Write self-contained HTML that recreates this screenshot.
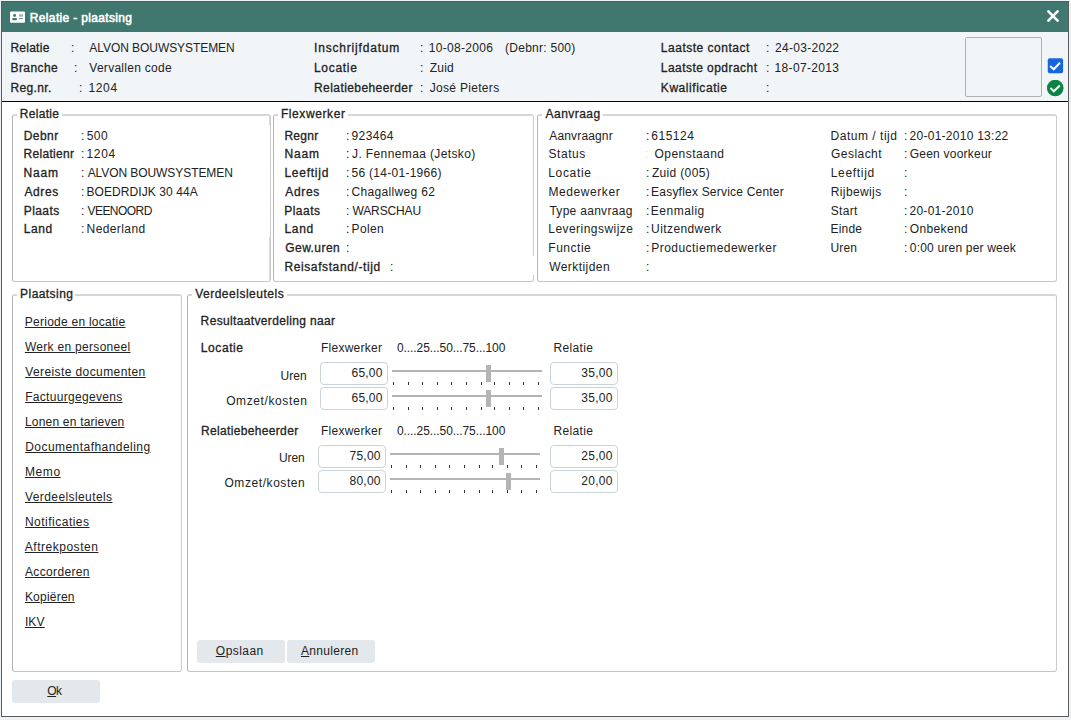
<!DOCTYPE html><html><head><meta charset="utf-8"><style>
*{margin:0;padding:0;box-sizing:border-box}
html,body{width:1071px;height:720px;overflow:hidden;background:#eef1f3;font-family:"Liberation Sans",sans-serif;font-size:12px;color:#222}
.t{position:absolute;white-space:pre;line-height:14px}
.b{-webkit-text-stroke:0.3px currentColor}
.bb{-webkit-text-stroke:0.55px currentColor}
.fs{position:absolute;border:1px solid #c4c4c4;border-top:2px solid #d6d6d6;border-left-color:#b2b2b2;border-right-color:#cacaca;border-radius:3px}
.lg{position:absolute;background:#fff;height:14px}
.u{text-decoration:underline;text-underline-offset:1px}
.inp{position:absolute;border:1px solid #c9d3dc;border-radius:4px;background:#fff}
</style></head><body><div style="position:absolute;left:1px;top:1px;width:1068px;height:716px;background:#fff;border:1px solid #5c5c5c"></div>
<div style="position:absolute;left:2px;top:2px;width:1066px;height:30px;background:#40776f"></div>
<svg style="position:absolute;left:10px;top:11px" width="18" height="14" viewBox="0 0 18 14"><rect x="0" y="0.55" width="15" height="11.15" rx="1" fill="#fff"/><circle cx="4.6" cy="4.5" r="1.45" fill="#40776f"/><rect x="2.2" y="7.1" width="4.8" height="2.1" rx="1" fill="#40776f"/><rect x="9.05" y="3.3" width="3.85" height="2.4" fill="#40776f" opacity="0.55"/><rect x="9.05" y="7.1" width="3.85" height="0.8" fill="#40776f"/></svg>
<div id="t1" class="t bb" style="top:11px;left:29.84px;letter-spacing:0.342px;color:#fff">Relatie - plaatsing</div>
<svg style="position:absolute;left:1046px;top:8.6px" width="14" height="14" viewBox="0 0 14 14"><path d="M2.4 2.4 L11.6 11.6 M11.6 2.4 L2.4 11.6" stroke="#fff" stroke-width="2.7" stroke-linecap="round"/></svg>
<div style="position:absolute;left:2px;top:32px;width:1066px;height:69px;background:#f1f5f8"></div>
<div style="position:absolute;left:2px;top:101px;width:1066px;height:1px;background:#000"></div>
<div id="t2" class="t b" style="top:41px;left:10.41px;letter-spacing:0.258px;">Relatie</div>
<div id="t3" class="t " style="top:41px;left:71.00px;">:</div>
<div id="t4" class="t " style="top:41px;left:89.37px;letter-spacing:-0.068px;">ALVON BOUWSYSTEMEN</div>
<div id="t5" class="t b" style="top:61px;left:10.46px;letter-spacing:0.440px;">Branche</div>
<div id="t6" class="t " style="top:61px;left:74.00px;">:</div>
<div id="t7" class="t " style="top:61px;left:89.31px;letter-spacing:0.277px;">Vervallen code</div>
<div id="t8" class="t b" style="top:81px;left:10.54px;letter-spacing:0.355px;">Reg.nr.</div>
<div id="t9" class="t " style="top:81px;left:79.00px;">:</div>
<div id="t10" class="t " style="top:81px;left:88.56px;letter-spacing:0.608px;">1204</div>
<div id="t11" class="t b" style="top:41px;left:314.07px;letter-spacing:0.812px;">Inschrijfdatum</div>
<div id="t12" class="t " style="top:41px;left:420.00px;">:</div>
<div id="t13" class="t " style="top:41px;left:428.81px;letter-spacing:0.294px;">10-08-2006</div>
<div id="t14" class="t b" style="top:61px;left:314.01px;letter-spacing:0.690px;">Locatie</div>
<div id="t15" class="t " style="top:61px;left:420.00px;">:</div>
<div id="t16" class="t " style="top:61px;left:429.73px;letter-spacing:0.221px;">Zuid</div>
<div id="t17" class="t b" style="top:81px;left:314.01px;letter-spacing:0.425px;">Relatiebeheerder</div>
<div id="t18" class="t " style="top:81px;left:420.00px;">:</div>
<div id="t19" class="t " style="top:81px;left:429.67px;letter-spacing:0.316px;">Jos&eacute; Pieters</div>
<div id="t20" class="t " style="top:41px;left:505.11px;letter-spacing:0.251px;">(Debnr: 500)</div>
<div id="t21" class="t b" style="top:41px;left:660.86px;letter-spacing:0.504px;">Laatste contact</div>
<div id="t22" class="t " style="top:41px;left:766.00px;">:</div>
<div id="t23" class="t " style="top:41px;left:775.03px;letter-spacing:0.291px;">24-03-2022</div>
<div id="t24" class="t b" style="top:61px;left:660.76px;letter-spacing:0.457px;">Laatste opdracht</div>
<div id="t25" class="t " style="top:61px;left:766.00px;">:</div>
<div id="t26" class="t " style="top:61px;left:774.61px;letter-spacing:0.316px;">18-07-2013</div>
<div id="t27" class="t b" style="top:81px;left:660.83px;letter-spacing:0.551px;">Kwalificatie</div>
<div id="t28" class="t " style="top:81px;left:766.00px;">:</div>
<div style="position:absolute;left:965px;top:37px;width:77px;height:60px;border:1px solid #b0b0b0;border-radius:2px"></div>
<svg style="position:absolute;left:1047px;top:58px" width="17" height="17" viewBox="0 0 17 17"><rect x="0.75" y="0.2" width="15.35" height="15" rx="2" fill="#1865e0"/><path d="M3.2 8 L6.7 11.3 L13 4.8" stroke="#fff" stroke-width="2" fill="none"/></svg>
<svg style="position:absolute;left:1047px;top:80px" width="18" height="18" viewBox="0 0 18 18"><circle cx="8.25" cy="8.05" r="8.3" fill="#0a8542"/><path d="M3.4 7.9 L6.8 11.3 L12.9 5.5" stroke="#fff" stroke-width="2" fill="none"/></svg>
<div class="fs" style="left:12px;top:114px;width:259px;height:168px"></div>
<div class="lg" style="left:16.8px;top:107px;width:44.900000000000006px"></div>
<div id="t29" class="t b" style="top:107px;left:19.74px;letter-spacing:0.313px;">Relatie</div>
<div class="fs" style="left:273px;top:114px;width:261px;height:168px"></div>
<div class="lg" style="left:278.0px;top:107px;width:70.30000000000001px"></div>
<div id="t30" class="t b" style="top:107px;left:280.90px;letter-spacing:0.599px;">Flexwerker</div>
<div class="fs" style="left:537px;top:114px;width:520px;height:168px"></div>
<div class="lg" style="left:542.1px;top:107px;width:60.69999999999993px"></div>
<div id="t31" class="t b" style="top:107px;left:545.52px;letter-spacing:0.472px;">Aanvraag</div>
<div style="position:absolute;left:269px;top:116px;width:1px;height:9px;background:#dadada"></div>
<div style="position:absolute;left:269px;top:237px;width:1px;height:43px;background:#dadada"></div>
<div style="position:absolute;left:533px;top:256px;width:1px;height:19px;background:#fff"></div>
<div class="fs" style="left:12px;top:294px;width:170px;height:378px"></div>
<div class="lg" style="left:17.1px;top:287px;width:58.4px"></div>
<div id="t32" class="t b" style="top:287px;left:20.12px;letter-spacing:0.432px;">Plaatsing</div>
<div class="fs" style="left:187px;top:294px;width:870px;height:378px"></div>
<div class="lg" style="left:191.7px;top:287px;width:95.0px"></div>
<div id="t33" class="t b" style="top:287px;left:195.15px;letter-spacing:0.512px;">Verdeelsleutels</div>
<div id="t34" class="t b" style="top:129px;left:23.66px;letter-spacing:0.454px;">Debnr</div>
<div id="t35" class="t " style="top:129px;left:81.00px;">:</div>
<div id="t36" class="t " style="top:129px;left:86.69px;letter-spacing:0.503px;">500</div>
<div id="t37" class="t b" style="top:147px;left:23.56px;letter-spacing:0.309px;">Relatienr</div>
<div id="t38" class="t " style="top:147px;left:81.00px;">:</div>
<div id="t39" class="t " style="top:147px;left:86.52px;letter-spacing:0.642px;">1204</div>
<div id="t40" class="t b" style="top:166px;left:23.60px;letter-spacing:0.789px;">Naam</div>
<div id="t41" class="t " style="top:166px;left:81.00px;">:</div>
<div id="t42" class="t " style="top:166px;left:87.66px;letter-spacing:-0.074px;">ALVON BOUWSYSTEMEN</div>
<div id="t43" class="t b" style="top:185px;left:24.40px;letter-spacing:0.613px;">Adres</div>
<div id="t44" class="t " style="top:185px;left:81.00px;">:</div>
<div id="t45" class="t " style="top:185px;left:86.56px;letter-spacing:0.072px;">BOEDRDIJK 30 44A</div>
<div id="t46" class="t b" style="top:204px;left:23.71px;letter-spacing:0.423px;">Plaats</div>
<div id="t47" class="t " style="top:204px;left:81.00px;">:</div>
<div id="t48" class="t " style="top:204px;left:87.46px;letter-spacing:-0.537px;">VEENOORD</div>
<div id="t49" class="t b" style="top:222px;left:23.73px;letter-spacing:0.614px;">Land</div>
<div id="t50" class="t " style="top:222px;left:81.00px;">:</div>
<div id="t51" class="t " style="top:222px;left:86.60px;letter-spacing:0.394px;">Nederland</div>
<div id="t52" class="t b" style="top:129px;left:284.44px;letter-spacing:0.253px;">Regnr</div>
<div id="t53" class="t " style="top:129px;left:346.00px;">:</div>
<div id="t54" class="t " style="top:129px;left:351.57px;letter-spacing:0.365px;">923464</div>
<div id="t55" class="t b" style="top:147px;left:284.40px;letter-spacing:0.856px;">Naam</div>
<div id="t56" class="t " style="top:147px;left:346.00px;">:</div>
<div id="t57" class="t " style="top:147px;left:352.05px;letter-spacing:0.377px;">J. Fennemaa (Jetsko)</div>
<div id="t58" class="t b" style="top:166px;left:284.45px;letter-spacing:0.749px;">Leeftijd</div>
<div id="t59" class="t " style="top:166px;left:346.00px;">:</div>
<div id="t60" class="t " style="top:166px;left:351.53px;letter-spacing:0.277px;">56 (14-01-1966)</div>
<div id="t61" class="t b" style="top:185px;left:285.23px;letter-spacing:0.688px;">Adres</div>
<div id="t62" class="t " style="top:185px;left:346.00px;">:</div>
<div id="t63" class="t " style="top:185px;left:351.62px;letter-spacing:0.319px;">Chagallweg 62</div>
<div id="t64" class="t b" style="top:204px;left:284.21px;letter-spacing:0.483px;">Plaats</div>
<div id="t65" class="t " style="top:204px;left:346.00px;">:</div>
<div id="t66" class="t " style="top:204px;left:352.45px;letter-spacing:-0.119px;">WARSCHAU</div>
<div id="t67" class="t b" style="top:222px;left:284.46px;letter-spacing:0.681px;">Land</div>
<div id="t68" class="t " style="top:222px;left:346.00px;">:</div>
<div id="t69" class="t " style="top:222px;left:351.52px;letter-spacing:0.390px;">Polen</div>
<div id="t70" class="t b" style="top:241px;left:285.26px;letter-spacing:0.443px;">Gew.uren</div>
<div id="t71" class="t " style="top:241px;left:346.00px;">:</div>
<div id="t72" class="t b" style="top:260px;left:284.41px;letter-spacing:0.608px;">Reisafstand/-tijd</div>
<div id="t73" class="t " style="top:260px;left:390.00px;">:</div>
<div id="t74" class="t " style="top:129px;left:549.27px;letter-spacing:0.154px;">Aanvraagnr</div>
<div id="t75" class="t " style="top:129px;left:646.00px;">:</div>
<div id="t76" class="t " style="top:129px;left:651.36px;letter-spacing:0.489px;">615124</div>
<div id="t77" class="t " style="top:147px;left:548.57px;letter-spacing:0.535px;">Status</div>
<div id="t78" class="t " style="top:147px;left:645.00px;color:#f9d49a">:</div>
<div id="t79" class="t " style="top:166px;left:548.28px;letter-spacing:0.654px;">Locatie</div>
<div id="t80" class="t " style="top:166px;left:646.00px;">:</div>
<div id="t81" class="t " style="top:166px;left:651.93px;letter-spacing:0.338px;">Zuid (005)</div>
<div id="t82" class="t " style="top:185px;left:548.40px;letter-spacing:0.589px;">Medewerker</div>
<div id="t83" class="t " style="top:185px;left:646.00px;">:</div>
<div id="t84" class="t " style="top:185px;left:651.11px;letter-spacing:0.205px;">Easyflex Service Center</div>
<div id="t85" class="t " style="top:204px;left:549.39px;letter-spacing:0.295px;">Type aanvraag</div>
<div id="t86" class="t " style="top:204px;left:646.00px;">:</div>
<div id="t87" class="t " style="top:204px;left:650.85px;letter-spacing:0.489px;">Eenmalig</div>
<div id="t88" class="t " style="top:222px;left:548.28px;letter-spacing:0.456px;">Leveringswijze</div>
<div id="t89" class="t " style="top:222px;left:646.00px;">:</div>
<div id="t90" class="t " style="top:222px;left:651.09px;letter-spacing:0.408px;">Uitzendwerk</div>
<div id="t91" class="t " style="top:241px;left:548.35px;letter-spacing:0.512px;">Functie</div>
<div id="t92" class="t " style="top:241px;left:646.00px;">:</div>
<div id="t93" class="t " style="top:241px;left:651.20px;letter-spacing:0.476px;">Productiemedewerker</div>
<div id="t94" class="t " style="top:260px;left:549.22px;letter-spacing:0.434px;">Werktijden</div>
<div id="t95" class="t " style="top:260px;left:646.00px;">:</div>
<div id="t96" class="t " style="top:147px;left:654.58px;letter-spacing:0.443px;">Openstaand</div>
<div id="t97" class="t " style="top:129px;left:830.60px;letter-spacing:0.515px;">Datum / tijd</div>
<div id="t98" class="t " style="top:129px;left:904.00px;">:</div>
<div id="t99" class="t " style="top:129px;left:909.62px;letter-spacing:0.260px;">20-01-2010 13:22</div>
<div id="t100" class="t " style="top:147px;left:830.99px;letter-spacing:0.462px;">Geslacht</div>
<div id="t101" class="t " style="top:147px;left:904.00px;">:</div>
<div id="t102" class="t " style="top:147px;left:909.69px;letter-spacing:0.228px;">Geen voorkeur</div>
<div id="t103" class="t " style="top:166px;left:830.65px;letter-spacing:0.696px;">Leeftijd</div>
<div id="t104" class="t " style="top:166px;left:904.00px;">:</div>
<div id="t105" class="t " style="top:185px;left:830.72px;letter-spacing:0.389px;">Rijbewijs</div>
<div id="t106" class="t " style="top:185px;left:904.00px;">:</div>
<div id="t107" class="t " style="top:204px;left:830.64px;letter-spacing:0.348px;">Start</div>
<div id="t108" class="t " style="top:204px;left:904.00px;">:</div>
<div id="t109" class="t " style="top:204px;left:909.48px;letter-spacing:0.276px;">20-01-2010</div>
<div id="t110" class="t " style="top:222px;left:830.60px;letter-spacing:0.156px;">Einde</div>
<div id="t111" class="t " style="top:222px;left:904.00px;">:</div>
<div id="t112" class="t " style="top:222px;left:909.82px;letter-spacing:0.355px;">Onbekend</div>
<div id="t113" class="t " style="top:241px;left:830.56px;letter-spacing:0.117px;">Uren</div>
<div id="t114" class="t " style="top:241px;left:904.00px;">:</div>
<div id="t115" class="t " style="top:241px;left:909.86px;letter-spacing:0.188px;">0:00 uren per week</div>
<div id="t116" class="t u" style="top:315px;left:24.80px;letter-spacing:0.251px;">Periode en locatie</div>
<div id="t117" class="t u" style="top:340px;left:24.88px;letter-spacing:0.302px;">Werk en personeel</div>
<div id="t118" class="t u" style="top:365px;left:25.17px;letter-spacing:0.408px;">Vereiste documenten</div>
<div id="t119" class="t u" style="top:390px;left:25.14px;letter-spacing:0.313px;">Factuurgegevens</div>
<div id="t120" class="t u" style="top:415px;left:25.00px;letter-spacing:0.195px;">Lonen en tarieven</div>
<div id="t121" class="t u" style="top:440px;left:25.22px;letter-spacing:0.450px;">Documentafhandeling</div>
<div id="t122" class="t u" style="top:465px;left:24.90px;letter-spacing:0.614px;">Memo</div>
<div id="t123" class="t u" style="top:490px;left:25.04px;letter-spacing:0.405px;">Verdeelsleutels</div>
<div id="t124" class="t u" style="top:515px;left:24.95px;letter-spacing:0.492px;">Notificaties</div>
<div id="t125" class="t u" style="top:540px;left:24.82px;letter-spacing:0.515px;">Aftrekposten</div>
<div id="t126" class="t u" style="top:565px;left:24.97px;letter-spacing:0.348px;">Accorderen</div>
<div id="t127" class="t u" style="top:590px;left:24.90px;letter-spacing:0.219px;">Kopi&euml;ren</div>
<div id="t128" class="t u" style="top:615px;left:24.89px;letter-spacing:0.152px;">IKV</div>
<div id="t129" class="t b" style="top:314px;left:200.61px;letter-spacing:0.350px;">Resultaatverdeling naar</div>
<div id="t130" class="t b" style="top:341px;left:200.83px;letter-spacing:0.572px;">Locatie</div>
<div id="t131" class="t " style="top:341px;left:320.97px;letter-spacing:0.263px;">Flexwerker</div>
<div id="t132" class="t " style="top:341px;left:396.97px;letter-spacing:-0.079px;">0....25...50...75...100</div>
<div id="t133" class="t " style="top:341px;left:553.55px;letter-spacing:0.345px;">Relatie</div>
<div id="t134" class="t " style="top:369px;right:764.24px;text-align:right;letter-spacing:0.092px;">Uren</div>
<div class="inp" style="left:320px;top:362px;width:68px;height:23px"></div>
<div id="t135" class="t " style="top:366px;right:688.30px;text-align:right;letter-spacing:0.238px;">65,00</div>
<div class="inp" style="left:550px;top:362px;width:68px;height:23px"></div>
<div id="t136" class="t " style="top:366px;right:458.22px;text-align:right;letter-spacing:0.319px;">35,00</div>
<div style="position:absolute;left:392px;top:370px;width:150px;height:2px;background:#b4b4b4"></div>
<div style="position:absolute;left:486px;top:365px;width:5px;height:17px;background:#b4b4b4"></div>
<div style="position:absolute;left:393px;top:382px;width:1px;height:3px;background:#333"></div>
<div style="position:absolute;left:408px;top:382px;width:1px;height:3px;background:#333"></div>
<div style="position:absolute;left:422px;top:382px;width:1px;height:3px;background:#333"></div>
<div style="position:absolute;left:437px;top:382px;width:1px;height:3px;background:#333"></div>
<div style="position:absolute;left:451px;top:382px;width:1px;height:3px;background:#333"></div>
<div style="position:absolute;left:466px;top:382px;width:1px;height:3px;background:#333"></div>
<div style="position:absolute;left:481px;top:382px;width:1px;height:3px;background:#333"></div>
<div style="position:absolute;left:494px;top:382px;width:1px;height:3px;background:#333"></div>
<div style="position:absolute;left:509px;top:382px;width:1px;height:3px;background:#333"></div>
<div style="position:absolute;left:523px;top:382px;width:1px;height:3px;background:#333"></div>
<div style="position:absolute;left:538px;top:382px;width:1px;height:3px;background:#333"></div>
<div id="t137" class="t " style="top:394px;right:763.56px;text-align:right;letter-spacing:0.604px;">Omzet/kosten</div>
<div class="inp" style="left:320px;top:387px;width:68px;height:23px"></div>
<div id="t138" class="t " style="top:391px;right:688.30px;text-align:right;letter-spacing:0.238px;">65,00</div>
<div class="inp" style="left:550px;top:387px;width:68px;height:23px"></div>
<div id="t139" class="t " style="top:391px;right:458.22px;text-align:right;letter-spacing:0.319px;">35,00</div>
<div style="position:absolute;left:392px;top:395px;width:150px;height:2px;background:#b4b4b4"></div>
<div style="position:absolute;left:486px;top:390px;width:5px;height:17px;background:#b4b4b4"></div>
<div style="position:absolute;left:393px;top:407px;width:1px;height:3px;background:#333"></div>
<div style="position:absolute;left:408px;top:407px;width:1px;height:3px;background:#333"></div>
<div style="position:absolute;left:422px;top:407px;width:1px;height:3px;background:#333"></div>
<div style="position:absolute;left:437px;top:407px;width:1px;height:3px;background:#333"></div>
<div style="position:absolute;left:451px;top:407px;width:1px;height:3px;background:#333"></div>
<div style="position:absolute;left:466px;top:407px;width:1px;height:3px;background:#333"></div>
<div style="position:absolute;left:481px;top:407px;width:1px;height:3px;background:#333"></div>
<div style="position:absolute;left:494px;top:407px;width:1px;height:3px;background:#333"></div>
<div style="position:absolute;left:509px;top:407px;width:1px;height:3px;background:#333"></div>
<div style="position:absolute;left:523px;top:407px;width:1px;height:3px;background:#333"></div>
<div style="position:absolute;left:538px;top:407px;width:1px;height:3px;background:#333"></div>
<div id="t140" class="t b" style="top:424px;left:200.92px;letter-spacing:0.345px;">Relatiebeheerder</div>
<div id="t141" class="t " style="top:424px;left:320.97px;letter-spacing:0.263px;">Flexwerker</div>
<div id="t142" class="t " style="top:424px;left:396.97px;letter-spacing:-0.079px;">0....25...50...75...100</div>
<div id="t143" class="t " style="top:424px;left:553.55px;letter-spacing:0.345px;">Relatie</div>
<div id="t144" class="t " style="top:451px;right:766.36px;text-align:right;letter-spacing:-0.063px;">Uren</div>
<div class="inp" style="left:318px;top:445px;width:68px;height:23px"></div>
<div id="t145" class="t " style="top:449px;right:690.30px;text-align:right;letter-spacing:0.230px;">75,00</div>
<div class="inp" style="left:550px;top:445px;width:68px;height:23px"></div>
<div id="t146" class="t " style="top:449px;right:458.22px;text-align:right;letter-spacing:0.305px;">25,00</div>
<div style="position:absolute;left:390px;top:453px;width:150px;height:2px;background:#b4b4b4"></div>
<div style="position:absolute;left:499px;top:448px;width:5px;height:17px;background:#b4b4b4"></div>
<div style="position:absolute;left:391px;top:465px;width:1px;height:3px;background:#333"></div>
<div style="position:absolute;left:406px;top:465px;width:1px;height:3px;background:#333"></div>
<div style="position:absolute;left:420px;top:465px;width:1px;height:3px;background:#333"></div>
<div style="position:absolute;left:435px;top:465px;width:1px;height:3px;background:#333"></div>
<div style="position:absolute;left:449px;top:465px;width:1px;height:3px;background:#333"></div>
<div style="position:absolute;left:464px;top:465px;width:1px;height:3px;background:#333"></div>
<div style="position:absolute;left:479px;top:465px;width:1px;height:3px;background:#333"></div>
<div style="position:absolute;left:492px;top:465px;width:1px;height:3px;background:#333"></div>
<div style="position:absolute;left:507px;top:465px;width:1px;height:3px;background:#333"></div>
<div style="position:absolute;left:521px;top:465px;width:1px;height:3px;background:#333"></div>
<div style="position:absolute;left:536px;top:465px;width:1px;height:3px;background:#333"></div>
<div id="t147" class="t " style="top:476px;right:765.67px;text-align:right;letter-spacing:0.570px;">Omzet/kosten</div>
<div class="inp" style="left:318px;top:470px;width:68px;height:23px"></div>
<div id="t148" class="t " style="top:474px;right:690.30px;text-align:right;letter-spacing:0.223px;">80,00</div>
<div class="inp" style="left:550px;top:470px;width:68px;height:23px"></div>
<div id="t149" class="t " style="top:474px;right:458.22px;text-align:right;letter-spacing:0.305px;">20,00</div>
<div style="position:absolute;left:390px;top:478px;width:150px;height:2px;background:#b4b4b4"></div>
<div style="position:absolute;left:506px;top:473px;width:5px;height:17px;background:#b4b4b4"></div>
<div style="position:absolute;left:391px;top:490px;width:1px;height:3px;background:#333"></div>
<div style="position:absolute;left:406px;top:490px;width:1px;height:3px;background:#333"></div>
<div style="position:absolute;left:420px;top:490px;width:1px;height:3px;background:#333"></div>
<div style="position:absolute;left:435px;top:490px;width:1px;height:3px;background:#333"></div>
<div style="position:absolute;left:449px;top:490px;width:1px;height:3px;background:#333"></div>
<div style="position:absolute;left:464px;top:490px;width:1px;height:3px;background:#333"></div>
<div style="position:absolute;left:479px;top:490px;width:1px;height:3px;background:#333"></div>
<div style="position:absolute;left:492px;top:490px;width:1px;height:3px;background:#333"></div>
<div style="position:absolute;left:507px;top:490px;width:1px;height:3px;background:#333"></div>
<div style="position:absolute;left:521px;top:490px;width:1px;height:3px;background:#333"></div>
<div style="position:absolute;left:536px;top:490px;width:1px;height:3px;background:#333"></div>
<div style="position:absolute;left:197px;top:640px;width:88px;height:23px;background:#e3e8ec;border-radius:3px"></div>
<div id="t150" class="t " style="top:644px;left:215.84px;letter-spacing:0.462px;"><span class="u">O</span>pslaan</div>
<div style="position:absolute;left:287px;top:640px;width:88px;height:23px;background:#e3e8ec;border-radius:3px"></div>
<div id="t151" class="t " style="top:644px;left:300.91px;letter-spacing:0.330px;"><span class="u">A</span>nnuleren</div>
<div style="position:absolute;left:12px;top:680px;width:88px;height:23px;background:#e3e8ec;border-radius:3px"></div>
<div id="t152" class="t " style="top:684px;left:47.30px;letter-spacing:-0.552px;"><span class="u">O</span>k</div></body></html>
